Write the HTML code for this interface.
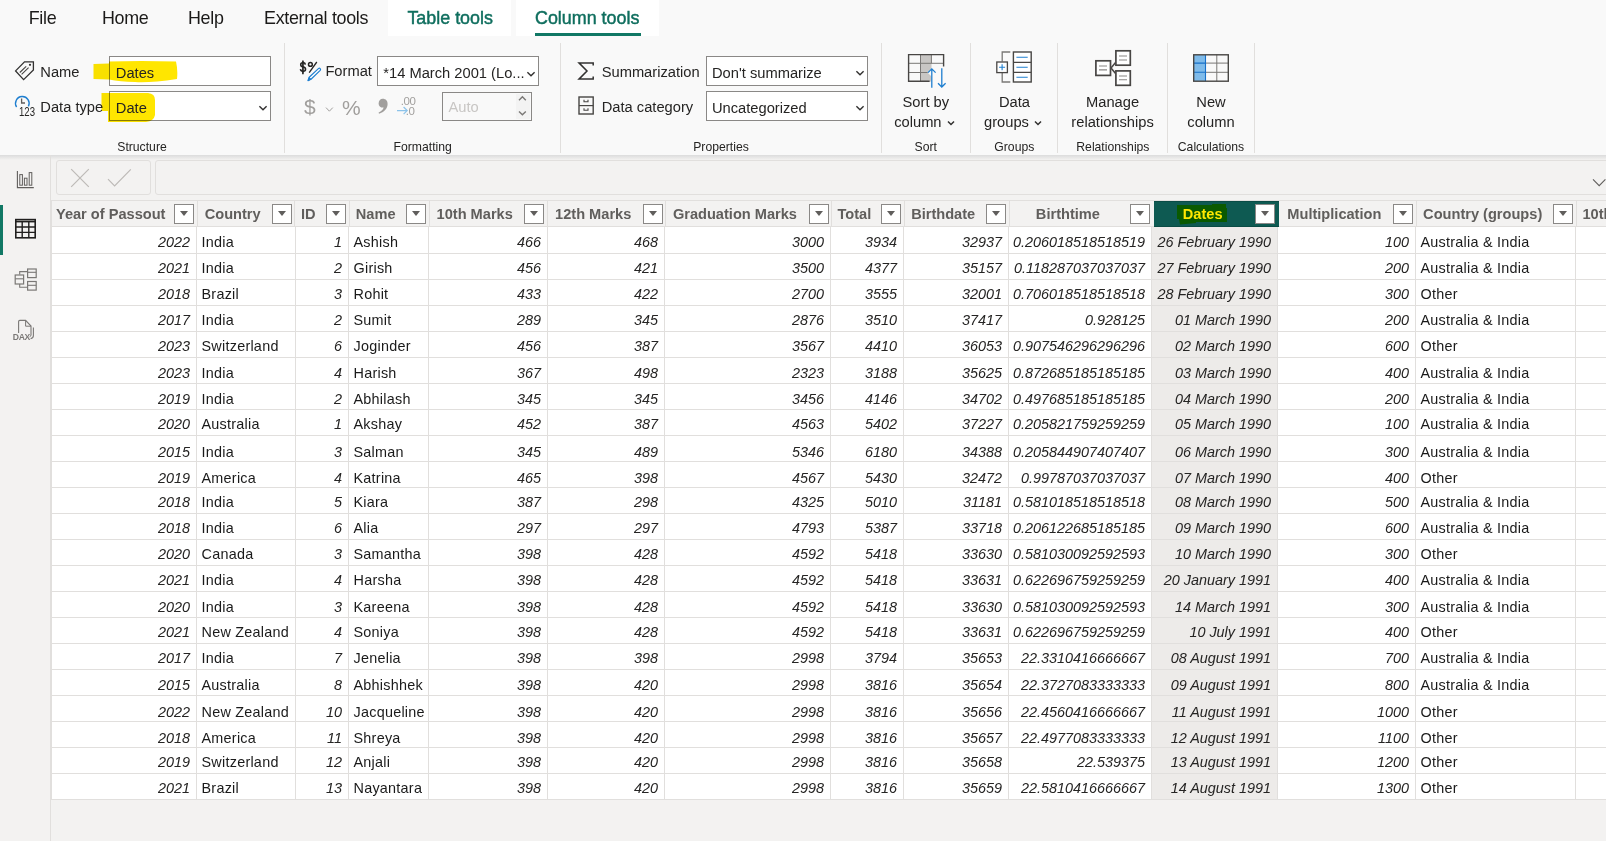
<!DOCTYPE html>
<html><head><meta charset="utf-8"><style>
html,body{margin:0;padding:0;}
body{width:1606px;height:841px;overflow:hidden;position:relative;background:#f3f2f1;font-family:"Liberation Sans", sans-serif;}
.t{position:absolute;white-space:nowrap;}
.r{position:absolute;}
</style></head><body>
<div class="r" style="left:0px;top:0px;width:1606px;height:155px;background:#f9f9f9"></div>
<div class="r" style="left:0px;top:155px;width:1606px;height:5px;background:linear-gradient(#dcdcdc,#f3f2f1)"></div>
<div class="r" style="left:388px;top:0px;width:123px;height:36px;background:#ffffff"></div>
<div class="r" style="left:516px;top:0px;width:143px;height:36px;background:#ffffff"></div>
<div class="t" style="left:28.7px;top:9.79px;font-size:17.9px;line-height:17.9px;color:#1b1a19;font-weight:normal;font-style:normal;letter-spacing:-0.3px;">File</div>
<div class="t" style="left:102px;top:9.79px;font-size:17.9px;line-height:17.9px;color:#1b1a19;font-weight:normal;font-style:normal;letter-spacing:-0.3px;">Home</div>
<div class="t" style="left:188px;top:9.79px;font-size:17.9px;line-height:17.9px;color:#1b1a19;font-weight:normal;font-style:normal;letter-spacing:-0.3px;">Help</div>
<div class="t" style="left:264px;top:9.79px;font-size:17.9px;line-height:17.9px;color:#1b1a19;font-weight:normal;font-style:normal;letter-spacing:-0.3px;">External tools</div>
<div class="t" style="left:407.4px;top:9.79px;font-size:17.9px;line-height:17.9px;color:#0f6e5e;font-weight:normal;font-style:normal;letter-spacing:0px;-webkit-text-stroke:0.45px #0f6e5e;">Table tools</div>
<div class="t" style="left:535px;top:9.79px;font-size:17.9px;line-height:17.9px;color:#0f6e5e;font-weight:normal;font-style:normal;letter-spacing:0px;-webkit-text-stroke:0.45px #0f6e5e;">Column tools</div>
<div class="r" style="left:535px;top:33px;width:106px;height:3px;background:#117865"></div>
<div class="r" style="left:284px;top:43px;width:1px;height:110px;background:#e1dfdd"></div>
<div class="r" style="left:560px;top:43px;width:1px;height:110px;background:#e1dfdd"></div>
<div class="r" style="left:881px;top:43px;width:1px;height:110px;background:#e1dfdd"></div>
<div class="r" style="left:970px;top:43px;width:1px;height:110px;background:#e1dfdd"></div>
<div class="r" style="left:1057px;top:43px;width:1px;height:110px;background:#e1dfdd"></div>
<div class="r" style="left:1167px;top:43px;width:1px;height:110px;background:#e1dfdd"></div>
<div class="r" style="left:1254px;top:43px;width:1px;height:110px;background:#e1dfdd"></div>
<div class="t" style="left:-58.0px;width:400px;text-align:center;top:141.03px;font-size:12.2px;line-height:12.2px;color:#252423;font-weight:normal;font-style:normal;">Structure</div>
<div class="t" style="left:222.7px;width:400px;text-align:center;top:141.03px;font-size:12.2px;line-height:12.2px;color:#252423;font-weight:normal;font-style:normal;">Formatting</div>
<div class="t" style="left:521.0px;width:400px;text-align:center;top:141.03px;font-size:12.2px;line-height:12.2px;color:#252423;font-weight:normal;font-style:normal;">Properties</div>
<div class="t" style="left:725.8px;width:400px;text-align:center;top:141.03px;font-size:12.2px;line-height:12.2px;color:#252423;font-weight:normal;font-style:normal;">Sort</div>
<div class="t" style="left:814.3px;width:400px;text-align:center;top:141.03px;font-size:12.2px;line-height:12.2px;color:#252423;font-weight:normal;font-style:normal;">Groups</div>
<div class="t" style="left:912.9000000000001px;width:400px;text-align:center;top:141.03px;font-size:12.2px;line-height:12.2px;color:#252423;font-weight:normal;font-style:normal;">Relationships</div>
<div class="t" style="left:1011.0px;width:400px;text-align:center;top:141.03px;font-size:12.2px;line-height:12.2px;color:#252423;font-weight:normal;font-style:normal;">Calculations</div>
<div class="t" style="left:40.3px;top:64.70px;font-size:14.7px;line-height:14.7px;color:#252423;font-weight:normal;font-style:normal;">Name</div>
<div class="t" style="left:40.3px;top:99.70px;font-size:14.7px;line-height:14.7px;color:#252423;font-weight:normal;font-style:normal;">Data type</div>
<div class="r" style="left:109px;top:56px;width:162px;height:30px;background:#fff;border:1px solid #8a8886;box-sizing:border-box"></div>
<div class="r" style="left:109px;top:91px;width:162px;height:30px;background:#fff;border:1px solid #8a8886;box-sizing:border-box"></div>
<svg class="r" style="left:0;top:0;mix-blend-mode:multiply" width="300" height="130" viewBox="0 0 300 130"><path d="M93.5 64 L109 63.5 L109 61.5 Q140 60.5 176 61.5 Q178 70 177 79 Q150 83 135 82 Q120 81.5 109 79.5 L93.5 79 Z" fill="#ffe600"/><path d="M101.5 93 L148 93 Q155 93.5 155 100 L155 115 Q154 121 146 122 L108 122 L108 111 L101.5 111 Z" fill="#ffe600"/></svg>
<div class="t" style="left:115.8px;top:66.00px;font-size:14.7px;line-height:14.7px;color:#252423;font-weight:normal;font-style:normal;">Dates</div>
<div class="t" style="left:115.8px;top:100.80px;font-size:14.7px;line-height:14.7px;color:#252423;font-weight:normal;font-style:normal;">Date</div>
<div class="t" style="left:325.4px;top:64.41px;font-size:14.7px;line-height:14.7px;color:#252423;font-weight:normal;font-style:normal;">Format</div>
<div class="r" style="left:377px;top:56px;width:162px;height:30px;background:#fff;border:1px solid #8a8886;box-sizing:border-box"></div>
<div class="t" style="left:383.3px;top:65.50px;font-size:14.7px;line-height:14.7px;color:#252423;font-weight:normal;font-style:normal;">*14 March 2001 (Lo...</div>
<div class="r" style="left:442px;top:92px;width:90px;height:29px;background:#f9f9f9;border:1px solid #8a8886;box-sizing:border-box"></div>
<div class="r" style="left:516px;top:94px;width:14px;height:25px;background:#f3f3f3"></div>
<div class="t" style="left:448.5px;top:99.91px;font-size:14.7px;line-height:14.7px;color:#c8c6c4;font-weight:normal;font-style:normal;">Auto</div>
<div class="t" style="left:601.7px;top:64.70px;font-size:14.7px;line-height:14.7px;color:#252423;font-weight:normal;font-style:normal;">Summarization</div>
<div class="t" style="left:601.7px;top:99.70px;font-size:14.7px;line-height:14.7px;color:#252423;font-weight:normal;font-style:normal;">Data category</div>
<div class="r" style="left:706px;top:56px;width:162px;height:30px;background:#fff;border:1px solid #8a8886;box-sizing:border-box"></div>
<div class="r" style="left:706px;top:91px;width:162px;height:30px;background:#fff;border:1px solid #8a8886;box-sizing:border-box"></div>
<div class="t" style="left:712px;top:65.50px;font-size:14.7px;line-height:14.7px;color:#252423;font-weight:normal;font-style:normal;">Don't summarize</div>
<div class="t" style="left:712px;top:100.50px;font-size:14.7px;line-height:14.7px;color:#252423;font-weight:normal;font-style:normal;">Uncategorized</div>
<div class="t" style="left:725.8px;width:400px;text-align:center;top:94.70px;font-size:14.7px;line-height:14.7px;color:#252423;font-weight:normal;font-style:normal;">Sort by</div>
<div class="t" style="left:814.5px;width:400px;text-align:center;top:94.70px;font-size:14.7px;line-height:14.7px;color:#252423;font-weight:normal;font-style:normal;">Data</div>
<div class="t" style="left:912.5999999999999px;width:400px;text-align:center;top:94.70px;font-size:14.7px;line-height:14.7px;color:#252423;font-weight:normal;font-style:normal;">Manage</div>
<div class="t" style="left:912.5999999999999px;width:400px;text-align:center;top:114.50px;font-size:14.7px;line-height:14.7px;color:#252423;font-weight:normal;font-style:normal;">relationships</div>
<div class="t" style="left:1011.0px;width:400px;text-align:center;top:94.70px;font-size:14.7px;line-height:14.7px;color:#252423;font-weight:normal;font-style:normal;">New</div>
<div class="t" style="left:1011.0px;width:400px;text-align:center;top:114.50px;font-size:14.7px;line-height:14.7px;color:#252423;font-weight:normal;font-style:normal;">column</div>
<div class="t" style="left:894.2px;top:114.50px;font-size:14.7px;line-height:14.7px;color:#252423;font-weight:normal;font-style:normal;">column</div>
<div class="t" style="left:984px;top:114.50px;font-size:14.7px;line-height:14.7px;color:#252423;font-weight:normal;font-style:normal;">groups</div>
<div class="r" style="left:0px;top:160px;width:50px;height:681px;background:#f3f2f1"></div>
<div class="r" style="left:50px;top:155px;width:1px;height:686px;background:#e1dfdd"></div>
<div class="r" style="left:0px;top:205px;width:3px;height:50px;background:#117865"></div>
<div class="r" style="left:56px;top:160px;width:95px;height:35px;border:1px solid #e1dfdd;border-radius:3px;box-sizing:border-box"></div>
<div class="r" style="left:155px;top:160px;width:1460px;height:35px;border:1px solid #e1dfdd;border-radius:3px;box-sizing:border-box"></div>
<svg class="r" style="left:12px;top:58px;" width="26" height="26" viewBox="12 58 26 26"><path d="M15.6 70.9 L24.5 61.8 L33.4 61.8 L33.4 70 L23.6 79.6 Z" fill="none" stroke="#323130" stroke-width="1.3" stroke-linejoin="miter"/><circle cx="30" cy="64.8" r="1.1" fill="#323130"/><path d="M19.8 72.5 L26.2 66.3 M21.6 74.4 L28.6 67.6" stroke="#484644" stroke-width="1.1"/></svg>
<svg class="r" style="left:12px;top:93px;" width="26" height="26" viewBox="12 93 26 26"><path d="M16.6 107 A6.8 6.8 0 1 1 28.4 106.4" fill="none" stroke="#1f7fd0" stroke-width="1.4"/><path d="M21.6 98.6 L21.6 103 L25 103" fill="none" stroke="#605e5c" stroke-width="1.3"/><text x="19" y="116" font-family="Liberation Sans" font-size="13.4" fill="#252423" textLength="16" lengthAdjust="spacingAndGlyphs">123</text></svg>
<svg class="r" style="left:296px;top:58px;" width="28" height="26" viewBox="296 58 28 26"><text x="299.4" y="72" font-family="Liberation Sans" font-weight="bold" font-size="14.5" fill="#252423" textLength="7" lengthAdjust="spacingAndGlyphs">$</text><path d="M302.9 60.6 L302.9 74.2" stroke="#252423" stroke-width="1.6"/><circle cx="310.4" cy="64.4" r="1.9" fill="none" stroke="#252423" stroke-width="1.5"/><path d="M316.8 62 L309.2 72.6" stroke="#252423" stroke-width="1.3"/><path d="M308 80.6 L309.2 77.2 L318.4 68.6 Q319.4 67.8 320.2 68.6 Q321 69.4 320.2 70.4 L311 79.2 Z" fill="#fff" stroke="#1f7fd0" stroke-width="1.2" stroke-linejoin="round"/><path d="M308 80.6 L309.2 77.2 L311 79.2 Z" fill="#1f7fd0" stroke="#1f7fd0" stroke-width="0.8"/></svg>
<svg class="r" style="left:300px;top:93px;" width="125" height="26" viewBox="300 93 125 26"><text x="304" y="114" font-family="Liberation Sans" font-size="21" fill="#a19f9d">$</text><path d="M326 107.6 L329.4 111.2 L332.8 107.6" fill="none" stroke="#a19f9d" stroke-width="1"/><text x="342" y="114.6" font-family="Liberation Sans" font-size="21" fill="#a19f9d">%</text><path d="M382.6 98.8 C386 98.8 387.6 101 387.6 104 C387.6 108.5 384 112.2 379 113.8 L378.6 112.6 C381.4 111.2 383.2 109.6 383.6 107.6 C380.6 107.8 378.6 106 378.6 103.4 C378.6 100.6 380.6 98.8 382.6 98.8 Z" fill="#a19f9d"/><text x="400.8" y="104.6" font-family="Liberation Sans" font-size="11.5" fill="#a19f9d" letter-spacing="-0.4">.00</text><text x="405.8" y="115.4" font-family="Liberation Sans" font-size="11.5" fill="#a19f9d" letter-spacing="-0.4">.0</text><path d="M397 110.6 L407 110.6 M403.6 107 L407.2 110.6 L403.6 114.2" fill="none" stroke="#8cc3ea" stroke-width="1.2"/></svg>
<svg class="r" style="left:514px;top:93px;" width="16" height="26" viewBox="514 93 16 26"><path d="M519 100.2 L522.4 96.8 L525.8 100.2 M519 111.4 L522.4 114.8 L525.8 111.4" fill="none" stroke="#7a7876" stroke-width="1.4"/></svg>
<svg class="r" style="left:257px;top:102.8px;" width="12" height="10" viewBox="257 102.8 12 10"><path d="M259.4 106.0 L263 109.6 L266.6 106.0" fill="none" stroke="#323130" stroke-width="1.4"/></svg>
<svg class="r" style="left:525px;top:68.6px;" width="12" height="10" viewBox="525 68.6 12 10"><path d="M527.4 71.8 L531 75.39999999999999 L534.6 71.8" fill="none" stroke="#323130" stroke-width="1.4"/></svg>
<svg class="r" style="left:854.3px;top:68.2px;" width="12" height="10" viewBox="854.3 68.2 12 10"><path d="M856.6999999999999 71.4 L860.3 75.0 L863.9 71.4" fill="none" stroke="#323130" stroke-width="1.4"/></svg>
<svg class="r" style="left:854.3px;top:103.2px;" width="12" height="10" viewBox="854.3 103.2 12 10"><path d="M856.6999999999999 106.4 L860.3 110.0 L863.9 106.4" fill="none" stroke="#323130" stroke-width="1.4"/></svg>
<svg class="r" style="left:575px;top:59px;" width="22" height="24" viewBox="575 59 22 24"><path d="M593.2 65.6 L593.2 62.9 L579 62.9 L587 71 L579 79.1 L593.2 79.1 L593.2 76.4" fill="none" stroke="#323130" stroke-width="1.5" stroke-linejoin="miter"/></svg>
<svg class="r" style="left:575px;top:93px;" width="22" height="24" viewBox="575 93 22 24"><rect x="579" y="97" width="14.2" height="17" fill="none" stroke="#484644" stroke-width="1.4"/><path d="M579 105.6 L593.2 105.6" stroke="#484644" stroke-width="1.2"/><path d="M584 99.8 L584 101.8 L588 101.8 L588 99.8 M584 108.2 L584 110.2 L588 110.2 L588 108.2" fill="none" stroke="#484644" stroke-width="1.1"/></svg>
<svg class="r" style="left:904px;top:50px;" width="46" height="42" viewBox="904 50 46 42"><rect x="920.5" y="54.2" width="11" height="27.4" fill="#c8c6c4"/><path d="M908.8 63.3 L943 63.3 M908.8 72.5 L930 72.5 M920.5 54.2 L920.5 81.6 M931.4 54.2 L931.4 63.3" stroke="#7a7876" stroke-width="1"/><path d="M943.6 66.4 L943.6 54.6 L908.6 54.6 L908.6 81.2 L929.6 81.2" fill="none" stroke="#484644" stroke-width="1.4"/><path d="M927.5 72.5 L931.8 68.2 L936 72.5 L931.8 76.8 Z" fill="#f9f9f9"/><path d="M931.8 87.7 L931.8 69 M928 72.6 L931.8 68.8 L935.6 72.6" fill="none" stroke="#1f7fd0" stroke-width="1.3"/><path d="M941.8 68.2 L941.8 87 M938 83.2 L941.8 87 L945.6 83.2" fill="none" stroke="#1f7fd0" stroke-width="1.3"/></svg>
<svg class="r" style="left:993px;top:48px;" width="42" height="38" viewBox="993 48 42 38"><path d="M1010.3 52 L1002.2 52 L1002.2 61.6 M1002.2 72.9 L1002.2 82 L1010.3 82" fill="none" stroke="#7a7876" stroke-width="1.3"/><rect x="996.8" y="62" width="10.6" height="10.6" fill="#fff" stroke="#484644" stroke-width="1.3"/><path d="M1002.1 64.3 L1002.1 70.3 M999.1 67.3 L1005.1 67.3" stroke="#1f7fd0" stroke-width="1.1"/><rect x="1013.4" y="52" width="17.8" height="30" fill="#fff" stroke="#484644" stroke-width="1.4"/><path d="M1013.4 62.4 L1031.2 62.4 M1013.4 72.4 L1031.2 72.4" stroke="#484644" stroke-width="1.2"/><path d="M1016.4 57.2 L1027.7 57.2 M1016.4 67.2 L1027.7 67.2 M1016.4 77.3 L1027.7 77.3" stroke="#1f7fd0" stroke-width="1.1"/></svg>
<svg class="r" style="left:1090px;top:46px;" width="46" height="44" viewBox="1090 46 46 44"><path d="M1111 68 L1115.6 62.6 M1111 68 L1115.6 73.6" stroke="#484644" stroke-width="1.6"/><rect x="1095.9" y="60.8" width="14.6" height="14.6" fill="#fff" stroke="#484644" stroke-width="1.7"/><rect x="1115.9" y="50.8" width="14.4" height="14.4" fill="#fff" stroke="#484644" stroke-width="1.7"/><rect x="1115.9" y="70.9" width="14.4" height="14.4" fill="#fff" stroke="#484644" stroke-width="1.7"/><path d="M1099 66 L1107 66 M1099 69.9 L1107 69.9 M1119 56 L1127 56 M1119 60 L1127 60 M1119 76 L1127 76 M1119 79.8 L1127 79.8" stroke="#8a8886" stroke-width="1.1"/></svg>
<svg class="r" style="left:1190px;top:50px;" width="42" height="36" viewBox="1190 50 42 36"><rect x="1193.6" y="54.7" width="12" height="26.5" fill="#7fbbea"/><path d="M1205.5 63.1 L1228 63.1 M1205.5 72.3 L1228 72.3 M1216.8 54.7 L1216.8 81.2" stroke="#7a7876" stroke-width="1"/><path d="M1194 63.1 L1205.5 63.1 M1194 72.3 L1205.5 72.3 M1205.5 54.7 L1205.5 81.2" stroke="#1770c8" stroke-width="1.1"/><rect x="1193.7" y="54.8" width="34.6" height="26.4" fill="none" stroke="#484644" stroke-width="1.4"/></svg>
<svg class="r" style="left:945.5px;top:119px;" width="10" height="8" viewBox="945.5 119 10 8"><path d="M947.5 121.5 L950.5 124.5 L953.5 121.5" fill="none" stroke="#323130" stroke-width="1.5"/></svg>
<svg class="r" style="left:1032.7px;top:119px;" width="10" height="8" viewBox="1032.7 119 10 8"><path d="M1034.7 121.5 L1037.7 124.5 L1040.7 121.5" fill="none" stroke="#323130" stroke-width="1.5"/></svg>
<svg class="r" style="left:66px;top:165px;" width="70" height="26" viewBox="66 165 70 26"><path d="M71.2 169.2 L88.8 186.8 M88.8 169.2 L71.2 186.8" stroke="#bdbab7" stroke-width="1.2"/><path d="M108 179.2 L114.6 185.8 L130.8 169.4" fill="none" stroke="#bdbab7" stroke-width="1.2"/></svg>
<svg class="r" style="left:1588px;top:174px;" width="18" height="16" viewBox="1588 174 18 16"><path d="M1593 179.4 L1599.2 185.6 L1605.4 179.4" fill="none" stroke="#605e5c" stroke-width="1.1"/></svg>
<svg class="r" style="left:12px;top:166px;" width="28" height="28" viewBox="12 166 28 28"><path d="M17.4 171 L17.4 187.6 L33.8 187.6" fill="none" stroke="#605e5c" stroke-width="1.1"/><rect x="19.8" y="174.6" width="2.6" height="10.6" fill="none" stroke="#605e5c" stroke-width="1"/><rect x="24.4" y="178.2" width="2.6" height="7" fill="none" stroke="#605e5c" stroke-width="1"/><rect x="29.2" y="172.6" width="2.6" height="12.6" fill="none" stroke="#605e5c" stroke-width="1"/></svg>
<svg class="r" style="left:12px;top:214px;" width="28" height="28" viewBox="12 214 28 28"><rect x="15.8" y="219.6" width="19.4" height="18.2" fill="none" stroke="#201f1e" stroke-width="1.6"/><path d="M15.8 221.6 L35.2 221.6" stroke="#201f1e" stroke-width="1.6"/><path d="M15.8 227 L35.2 227 M15.8 232.4 L35.2 232.4 M22.2 221.6 L22.2 237.8 M28.8 221.6 L28.8 237.8" stroke="#201f1e" stroke-width="1.4"/></svg>
<svg class="r" style="left:10px;top:264px;" width="32" height="32" viewBox="10 264 32 32"><path d="M19.7 274.6 L19.7 271.6 L27.4 271.6 M19.7 284 L19.7 287.3 L27.4 287.3" fill="none" stroke="#7a7876" stroke-width="1.1"/><rect x="15.2" y="275" width="8.4" height="9" fill="#f3f2f1" stroke="#7a7876" stroke-width="1.2"/><path d="M15.2 278.8 L23.6 278.8" stroke="#7a7876" stroke-width="1.1"/><rect x="27.6" y="269" width="8.6" height="8.6" fill="#f3f2f1" stroke="#7a7876" stroke-width="1.2"/><path d="M27.6 272.3 L36.2 272.3" stroke="#7a7876" stroke-width="1.1"/><rect x="27.6" y="281.5" width="8.6" height="8.6" fill="#f3f2f1" stroke="#7a7876" stroke-width="1.2"/><path d="M27.6 285.3 L36.2 285.3" stroke="#7a7876" stroke-width="1.1"/></svg>
<svg class="r" style="left:10px;top:315px;" width="30" height="28" viewBox="10 315 30 28"><path d="M18.6 333 L18.6 321.6 Q18.6 320.4 19.8 320.4 L25.6 320.4 L31 326 L31 335" fill="none" stroke="#7a7876" stroke-width="1.1"/><path d="M25.6 320.6 L25.6 326.2 L31 326.2" fill="none" stroke="#7a7876" stroke-width="1"/><path d="M33.4 327.4 L33.4 335.6 Q33.4 338.2 30.6 338.6" fill="none" stroke="#7a7876" stroke-width="1.1"/><path d="M31 335 Q31 336.4 29.6 336.8" fill="none" stroke="#7a7876" stroke-width="1"/><text x="12.8" y="339.5" font-family="Liberation Sans" font-weight="bold" font-size="8.6" fill="#7a7876" letter-spacing="-0.3">DAX</text></svg>
<div class="r" style="left:51px;top:227px;width:1555px;height:572px;background:#ffffff"></div>
<div class="r" style="left:1151px;top:227px;width:126px;height:572px;background:#edebe9"></div>
<div class="r" style="left:51px;top:200px;width:1555px;height:27px;background:#f3f2f1"></div>
<div class="r" style="left:51px;top:200px;width:1555px;height:1px;background:#e1dfdd"></div>
<div class="r" style="left:51px;top:226px;width:1555px;height:1px;background:#e1dfdd"></div>
<div class="r" style="left:1154px;top:201px;width:125px;height:26px;background:#0e5a52;border-top:1px solid #0a4c45;border-bottom:1px solid #0a4c45;box-sizing:border-box"></div>
<div class="r" style="left:51px;top:201px;width:1px;height:25px;background:#e1dfdd"></div>
<div class="r" style="left:197px;top:201px;width:1px;height:25px;background:#e1dfdd"></div>
<div class="r" style="left:294px;top:201px;width:1px;height:25px;background:#e1dfdd"></div>
<div class="r" style="left:349px;top:201px;width:1px;height:25px;background:#e1dfdd"></div>
<div class="r" style="left:429px;top:201px;width:1px;height:25px;background:#e1dfdd"></div>
<div class="r" style="left:547px;top:201px;width:1px;height:25px;background:#e1dfdd"></div>
<div class="r" style="left:665px;top:201px;width:1px;height:25px;background:#e1dfdd"></div>
<div class="r" style="left:831px;top:201px;width:1px;height:25px;background:#e1dfdd"></div>
<div class="r" style="left:904px;top:201px;width:1px;height:25px;background:#e1dfdd"></div>
<div class="r" style="left:1009px;top:201px;width:1px;height:25px;background:#e1dfdd"></div>
<div class="r" style="left:1416px;top:201px;width:1px;height:25px;background:#e1dfdd"></div>
<div class="r" style="left:1576px;top:201px;width:1px;height:25px;background:#e1dfdd"></div>
<div class="r" style="left:51px;top:253px;width:1555px;height:1px;background:#e1dfdd"></div>
<div class="r" style="left:51px;top:279px;width:1555px;height:1px;background:#e1dfdd"></div>
<div class="r" style="left:51px;top:305px;width:1555px;height:1px;background:#e1dfdd"></div>
<div class="r" style="left:51px;top:331px;width:1555px;height:1px;background:#e1dfdd"></div>
<div class="r" style="left:51px;top:357px;width:1555px;height:1px;background:#e1dfdd"></div>
<div class="r" style="left:51px;top:383px;width:1555px;height:1px;background:#e1dfdd"></div>
<div class="r" style="left:51px;top:409px;width:1555px;height:1px;background:#e1dfdd"></div>
<div class="r" style="left:51px;top:435px;width:1555px;height:1px;background:#e1dfdd"></div>
<div class="r" style="left:51px;top:461px;width:1555px;height:1px;background:#e1dfdd"></div>
<div class="r" style="left:51px;top:487px;width:1555px;height:1px;background:#e1dfdd"></div>
<div class="r" style="left:51px;top:513px;width:1555px;height:1px;background:#e1dfdd"></div>
<div class="r" style="left:51px;top:539px;width:1555px;height:1px;background:#e1dfdd"></div>
<div class="r" style="left:51px;top:565px;width:1555px;height:1px;background:#e1dfdd"></div>
<div class="r" style="left:51px;top:591px;width:1555px;height:1px;background:#e1dfdd"></div>
<div class="r" style="left:51px;top:617px;width:1555px;height:1px;background:#e1dfdd"></div>
<div class="r" style="left:51px;top:643px;width:1555px;height:1px;background:#e1dfdd"></div>
<div class="r" style="left:51px;top:669px;width:1555px;height:1px;background:#e1dfdd"></div>
<div class="r" style="left:51px;top:695px;width:1555px;height:1px;background:#e1dfdd"></div>
<div class="r" style="left:51px;top:721px;width:1555px;height:1px;background:#e1dfdd"></div>
<div class="r" style="left:51px;top:747px;width:1555px;height:1px;background:#e1dfdd"></div>
<div class="r" style="left:51px;top:773px;width:1555px;height:1px;background:#e1dfdd"></div>
<div class="r" style="left:51px;top:799px;width:1555px;height:1px;background:#e1dfdd"></div>
<div class="r" style="left:51px;top:227px;width:1px;height:572px;background:#e1dfdd"></div>
<div class="r" style="left:196px;top:227px;width:1px;height:572px;background:#e1dfdd"></div>
<div class="r" style="left:295px;top:227px;width:1px;height:572px;background:#e1dfdd"></div>
<div class="r" style="left:348px;top:227px;width:1px;height:572px;background:#e1dfdd"></div>
<div class="r" style="left:428px;top:227px;width:1px;height:572px;background:#e1dfdd"></div>
<div class="r" style="left:547px;top:227px;width:1px;height:572px;background:#e1dfdd"></div>
<div class="r" style="left:664px;top:227px;width:1px;height:572px;background:#e1dfdd"></div>
<div class="r" style="left:830px;top:227px;width:1px;height:572px;background:#e1dfdd"></div>
<div class="r" style="left:903px;top:227px;width:1px;height:572px;background:#e1dfdd"></div>
<div class="r" style="left:1008px;top:227px;width:1px;height:572px;background:#e1dfdd"></div>
<div class="r" style="left:1151px;top:227px;width:1px;height:572px;background:#e1dfdd"></div>
<div class="r" style="left:1277px;top:227px;width:1px;height:572px;background:#e1dfdd"></div>
<div class="r" style="left:1415px;top:227px;width:1px;height:572px;background:#e1dfdd"></div>
<div class="r" style="left:1575px;top:227px;width:1px;height:572px;background:#e1dfdd"></div>
<svg class="r" style="left:1170px;top:200px" width="70" height="30" viewBox="0 0 70 30"><path d="M7 5 L42 5 L42 4 L56 4 L56 8 L57 8 L57 22 L26 22 L26 23 L10 24.6 L9 19 L7 19 Z" fill="#0a5a00"/></svg>
<div class="t" style="left:-89.3px;width:400px;text-align:center;top:207.19px;font-size:14.6px;line-height:14.6px;color:#605e5c;font-weight:bold;font-style:normal;">Year of Passout</div>
<div class="r" style="left:174px;top:204px;width:20px;height:20px;background:#fff;border:1px solid #8a8886;box-sizing:border-box"></div>
<svg class="r" style="left:180px;top:211px" width="8" height="5" viewBox="0 0 8 5"><path d="M0 0 L8 0 L4 5 Z" fill="#605e5c"/></svg>
<div class="t" style="left:32.69999999999999px;width:400px;text-align:center;top:207.19px;font-size:14.6px;line-height:14.6px;color:#605e5c;font-weight:bold;font-style:normal;">Country</div>
<div class="r" style="left:272px;top:204px;width:20px;height:20px;background:#fff;border:1px solid #8a8886;box-sizing:border-box"></div>
<svg class="r" style="left:278px;top:211px" width="8" height="5" viewBox="0 0 8 5"><path d="M0 0 L8 0 L4 5 Z" fill="#605e5c"/></svg>
<div class="t" style="left:108.19999999999999px;width:400px;text-align:center;top:207.19px;font-size:14.6px;line-height:14.6px;color:#605e5c;font-weight:bold;font-style:normal;">ID</div>
<div class="r" style="left:326px;top:204px;width:20px;height:20px;background:#fff;border:1px solid #8a8886;box-sizing:border-box"></div>
<svg class="r" style="left:332px;top:211px" width="8" height="5" viewBox="0 0 8 5"><path d="M0 0 L8 0 L4 5 Z" fill="#605e5c"/></svg>
<div class="t" style="left:175.7px;width:400px;text-align:center;top:207.19px;font-size:14.6px;line-height:14.6px;color:#605e5c;font-weight:bold;font-style:normal;">Name</div>
<div class="r" style="left:406px;top:204px;width:20px;height:20px;background:#fff;border:1px solid #8a8886;box-sizing:border-box"></div>
<svg class="r" style="left:412px;top:211px" width="8" height="5" viewBox="0 0 8 5"><path d="M0 0 L8 0 L4 5 Z" fill="#605e5c"/></svg>
<div class="t" style="left:274.7px;width:400px;text-align:center;top:207.19px;font-size:14.6px;line-height:14.6px;color:#605e5c;font-weight:bold;font-style:normal;">10th Marks</div>
<div class="r" style="left:524px;top:204px;width:20px;height:20px;background:#fff;border:1px solid #8a8886;box-sizing:border-box"></div>
<svg class="r" style="left:530px;top:211px" width="8" height="5" viewBox="0 0 8 5"><path d="M0 0 L8 0 L4 5 Z" fill="#605e5c"/></svg>
<div class="t" style="left:393.20000000000005px;width:400px;text-align:center;top:207.19px;font-size:14.6px;line-height:14.6px;color:#605e5c;font-weight:bold;font-style:normal;">12th Marks</div>
<div class="r" style="left:643px;top:204px;width:20px;height:20px;background:#fff;border:1px solid #8a8886;box-sizing:border-box"></div>
<svg class="r" style="left:649px;top:211px" width="8" height="5" viewBox="0 0 8 5"><path d="M0 0 L8 0 L4 5 Z" fill="#605e5c"/></svg>
<div class="t" style="left:534.95px;width:400px;text-align:center;top:207.19px;font-size:14.6px;line-height:14.6px;color:#605e5c;font-weight:bold;font-style:normal;">Graduation Marks</div>
<div class="r" style="left:808.5px;top:204px;width:20px;height:20px;background:#fff;border:1px solid #8a8886;box-sizing:border-box"></div>
<svg class="r" style="left:814.5px;top:211px" width="8" height="5" viewBox="0 0 8 5"><path d="M0 0 L8 0 L4 5 Z" fill="#605e5c"/></svg>
<div class="t" style="left:654.4000000000001px;width:400px;text-align:center;top:207.19px;font-size:14.6px;line-height:14.6px;color:#605e5c;font-weight:bold;font-style:normal;">Total</div>
<div class="r" style="left:881.4px;top:204px;width:20px;height:20px;background:#fff;border:1px solid #8a8886;box-sizing:border-box"></div>
<svg class="r" style="left:887.4px;top:211px" width="8" height="5" viewBox="0 0 8 5"><path d="M0 0 L8 0 L4 5 Z" fill="#605e5c"/></svg>
<div class="t" style="left:743.2px;width:400px;text-align:center;top:207.19px;font-size:14.6px;line-height:14.6px;color:#605e5c;font-weight:bold;font-style:normal;">Birthdate</div>
<div class="r" style="left:986px;top:204px;width:20px;height:20px;background:#fff;border:1px solid #8a8886;box-sizing:border-box"></div>
<svg class="r" style="left:992px;top:211px" width="8" height="5" viewBox="0 0 8 5"><path d="M0 0 L8 0 L4 5 Z" fill="#605e5c"/></svg>
<div class="t" style="left:867.9000000000001px;width:400px;text-align:center;top:207.19px;font-size:14.6px;line-height:14.6px;color:#605e5c;font-weight:bold;font-style:normal;">Birthtime</div>
<div class="r" style="left:1130.4px;top:204px;width:20px;height:20px;background:#fff;border:1px solid #8a8886;box-sizing:border-box"></div>
<svg class="r" style="left:1136.4px;top:211px" width="8" height="5" viewBox="0 0 8 5"><path d="M0 0 L8 0 L4 5 Z" fill="#605e5c"/></svg>
<div class="t" style="left:1002.7px;width:400px;text-align:center;top:207.19px;font-size:14.6px;line-height:14.6px;color:#ffe800;font-weight:bold;font-style:normal;">Dates</div>
<div class="r" style="left:1255px;top:204px;width:20px;height:20px;background:#fff;border:1px solid #8a8886;box-sizing:border-box"></div>
<svg class="r" style="left:1261px;top:211px" width="8" height="5" viewBox="0 0 8 5"><path d="M0 0 L8 0 L4 5 Z" fill="#605e5c"/></svg>
<div class="t" style="left:1134.3500000000001px;width:400px;text-align:center;top:207.19px;font-size:14.6px;line-height:14.6px;color:#605e5c;font-weight:bold;font-style:normal;">Multiplication</div>
<div class="r" style="left:1393.3px;top:204px;width:20px;height:20px;background:#fff;border:1px solid #8a8886;box-sizing:border-box"></div>
<svg class="r" style="left:1399.3px;top:211px" width="8" height="5" viewBox="0 0 8 5"><path d="M0 0 L8 0 L4 5 Z" fill="#605e5c"/></svg>
<div class="t" style="left:1282.7px;width:400px;text-align:center;top:207.19px;font-size:14.6px;line-height:14.6px;color:#605e5c;font-weight:bold;font-style:normal;">Country (groups)</div>
<div class="r" style="left:1553px;top:204px;width:20px;height:20px;background:#fff;border:1px solid #8a8886;box-sizing:border-box"></div>
<svg class="r" style="left:1559px;top:211px" width="8" height="5" viewBox="0 0 8 5"><path d="M0 0 L8 0 L4 5 Z" fill="#605e5c"/></svg>
<div class="t" style="left:1582.5px;top:207.19px;font-size:14.6px;line-height:14.6px;color:#605e5c;font-weight:bold;font-style:normal;">10th Marks</div>
<div class="t" style="right:1416px;top:234.96px;font-size:14.4px;line-height:14.4px;color:#252423;font-weight:normal;font-style:italic;">2022</div>
<div class="t" style="left:201.5px;top:234.96px;font-size:14.4px;line-height:14.4px;color:#1a1a1a;font-weight:normal;font-style:normal;letter-spacing:0.25px">India</div>
<div class="t" style="right:1264px;top:234.96px;font-size:14.4px;line-height:14.4px;color:#252423;font-weight:normal;font-style:italic;">1</div>
<div class="t" style="left:353.5px;top:234.96px;font-size:14.4px;line-height:14.4px;color:#1a1a1a;font-weight:normal;font-style:normal;letter-spacing:0.25px">Ashish</div>
<div class="t" style="right:1065px;top:234.96px;font-size:14.4px;line-height:14.4px;color:#252423;font-weight:normal;font-style:italic;">466</div>
<div class="t" style="right:948px;top:234.96px;font-size:14.4px;line-height:14.4px;color:#252423;font-weight:normal;font-style:italic;">468</div>
<div class="t" style="right:782px;top:234.96px;font-size:14.4px;line-height:14.4px;color:#252423;font-weight:normal;font-style:italic;">3000</div>
<div class="t" style="right:709px;top:234.96px;font-size:14.4px;line-height:14.4px;color:#252423;font-weight:normal;font-style:italic;">3934</div>
<div class="t" style="right:604px;top:234.96px;font-size:14.4px;line-height:14.4px;color:#252423;font-weight:normal;font-style:italic;">32937</div>
<div class="t" style="right:461px;top:234.96px;font-size:14.4px;line-height:14.4px;color:#252423;font-weight:normal;font-style:italic;">0.206018518518519</div>
<div class="t" style="right:335px;top:234.96px;font-size:14.4px;line-height:14.4px;color:#252423;font-weight:normal;font-style:italic;">26 February 1990</div>
<div class="t" style="right:197px;top:234.96px;font-size:14.4px;line-height:14.4px;color:#252423;font-weight:normal;font-style:italic;">100</div>
<div class="t" style="left:1420.5px;top:234.96px;font-size:14.4px;line-height:14.4px;color:#1a1a1a;font-weight:normal;font-style:normal;letter-spacing:0.25px">Australia &amp; India</div>
<div class="t" style="right:1416px;top:260.76px;font-size:14.4px;line-height:14.4px;color:#252423;font-weight:normal;font-style:italic;">2021</div>
<div class="t" style="left:201.5px;top:260.76px;font-size:14.4px;line-height:14.4px;color:#1a1a1a;font-weight:normal;font-style:normal;letter-spacing:0.25px">India</div>
<div class="t" style="right:1264px;top:260.76px;font-size:14.4px;line-height:14.4px;color:#252423;font-weight:normal;font-style:italic;">2</div>
<div class="t" style="left:353.5px;top:260.76px;font-size:14.4px;line-height:14.4px;color:#1a1a1a;font-weight:normal;font-style:normal;letter-spacing:0.25px">Girish</div>
<div class="t" style="right:1065px;top:260.76px;font-size:14.4px;line-height:14.4px;color:#252423;font-weight:normal;font-style:italic;">456</div>
<div class="t" style="right:948px;top:260.76px;font-size:14.4px;line-height:14.4px;color:#252423;font-weight:normal;font-style:italic;">421</div>
<div class="t" style="right:782px;top:260.76px;font-size:14.4px;line-height:14.4px;color:#252423;font-weight:normal;font-style:italic;">3500</div>
<div class="t" style="right:709px;top:260.76px;font-size:14.4px;line-height:14.4px;color:#252423;font-weight:normal;font-style:italic;">4377</div>
<div class="t" style="right:604px;top:260.76px;font-size:14.4px;line-height:14.4px;color:#252423;font-weight:normal;font-style:italic;">35157</div>
<div class="t" style="right:461px;top:260.76px;font-size:14.4px;line-height:14.4px;color:#252423;font-weight:normal;font-style:italic;">0.118287037037037</div>
<div class="t" style="right:335px;top:260.76px;font-size:14.4px;line-height:14.4px;color:#252423;font-weight:normal;font-style:italic;">27 February 1990</div>
<div class="t" style="right:197px;top:260.76px;font-size:14.4px;line-height:14.4px;color:#252423;font-weight:normal;font-style:italic;">200</div>
<div class="t" style="left:1420.5px;top:260.76px;font-size:14.4px;line-height:14.4px;color:#1a1a1a;font-weight:normal;font-style:normal;letter-spacing:0.25px">Australia &amp; India</div>
<div class="t" style="right:1416px;top:286.86px;font-size:14.4px;line-height:14.4px;color:#252423;font-weight:normal;font-style:italic;">2018</div>
<div class="t" style="left:201.5px;top:286.86px;font-size:14.4px;line-height:14.4px;color:#1a1a1a;font-weight:normal;font-style:normal;letter-spacing:0.25px">Brazil</div>
<div class="t" style="right:1264px;top:286.86px;font-size:14.4px;line-height:14.4px;color:#252423;font-weight:normal;font-style:italic;">3</div>
<div class="t" style="left:353.5px;top:286.86px;font-size:14.4px;line-height:14.4px;color:#1a1a1a;font-weight:normal;font-style:normal;letter-spacing:0.25px">Rohit</div>
<div class="t" style="right:1065px;top:286.86px;font-size:14.4px;line-height:14.4px;color:#252423;font-weight:normal;font-style:italic;">433</div>
<div class="t" style="right:948px;top:286.86px;font-size:14.4px;line-height:14.4px;color:#252423;font-weight:normal;font-style:italic;">422</div>
<div class="t" style="right:782px;top:286.86px;font-size:14.4px;line-height:14.4px;color:#252423;font-weight:normal;font-style:italic;">2700</div>
<div class="t" style="right:709px;top:286.86px;font-size:14.4px;line-height:14.4px;color:#252423;font-weight:normal;font-style:italic;">3555</div>
<div class="t" style="right:604px;top:286.86px;font-size:14.4px;line-height:14.4px;color:#252423;font-weight:normal;font-style:italic;">32001</div>
<div class="t" style="right:461px;top:286.86px;font-size:14.4px;line-height:14.4px;color:#252423;font-weight:normal;font-style:italic;">0.706018518518518</div>
<div class="t" style="right:335px;top:286.86px;font-size:14.4px;line-height:14.4px;color:#252423;font-weight:normal;font-style:italic;">28 February 1990</div>
<div class="t" style="right:197px;top:286.86px;font-size:14.4px;line-height:14.4px;color:#252423;font-weight:normal;font-style:italic;">300</div>
<div class="t" style="left:1420.5px;top:286.86px;font-size:14.4px;line-height:14.4px;color:#1a1a1a;font-weight:normal;font-style:normal;letter-spacing:0.25px">Other</div>
<div class="t" style="right:1416px;top:312.86px;font-size:14.4px;line-height:14.4px;color:#252423;font-weight:normal;font-style:italic;">2017</div>
<div class="t" style="left:201.5px;top:312.86px;font-size:14.4px;line-height:14.4px;color:#1a1a1a;font-weight:normal;font-style:normal;letter-spacing:0.25px">India</div>
<div class="t" style="right:1264px;top:312.86px;font-size:14.4px;line-height:14.4px;color:#252423;font-weight:normal;font-style:italic;">2</div>
<div class="t" style="left:353.5px;top:312.86px;font-size:14.4px;line-height:14.4px;color:#1a1a1a;font-weight:normal;font-style:normal;letter-spacing:0.25px">Sumit</div>
<div class="t" style="right:1065px;top:312.86px;font-size:14.4px;line-height:14.4px;color:#252423;font-weight:normal;font-style:italic;">289</div>
<div class="t" style="right:948px;top:312.86px;font-size:14.4px;line-height:14.4px;color:#252423;font-weight:normal;font-style:italic;">345</div>
<div class="t" style="right:782px;top:312.86px;font-size:14.4px;line-height:14.4px;color:#252423;font-weight:normal;font-style:italic;">2876</div>
<div class="t" style="right:709px;top:312.86px;font-size:14.4px;line-height:14.4px;color:#252423;font-weight:normal;font-style:italic;">3510</div>
<div class="t" style="right:604px;top:312.86px;font-size:14.4px;line-height:14.4px;color:#252423;font-weight:normal;font-style:italic;">37417</div>
<div class="t" style="right:461px;top:312.86px;font-size:14.4px;line-height:14.4px;color:#252423;font-weight:normal;font-style:italic;">0.928125</div>
<div class="t" style="right:335px;top:312.86px;font-size:14.4px;line-height:14.4px;color:#252423;font-weight:normal;font-style:italic;">01 March 1990</div>
<div class="t" style="right:197px;top:312.86px;font-size:14.4px;line-height:14.4px;color:#252423;font-weight:normal;font-style:italic;">200</div>
<div class="t" style="left:1420.5px;top:312.86px;font-size:14.4px;line-height:14.4px;color:#1a1a1a;font-weight:normal;font-style:normal;letter-spacing:0.25px">Australia &amp; India</div>
<div class="t" style="right:1416px;top:339.46px;font-size:14.4px;line-height:14.4px;color:#252423;font-weight:normal;font-style:italic;">2023</div>
<div class="t" style="left:201.5px;top:339.46px;font-size:14.4px;line-height:14.4px;color:#1a1a1a;font-weight:normal;font-style:normal;letter-spacing:0.25px">Switzerland</div>
<div class="t" style="right:1264px;top:339.46px;font-size:14.4px;line-height:14.4px;color:#252423;font-weight:normal;font-style:italic;">6</div>
<div class="t" style="left:353.5px;top:339.46px;font-size:14.4px;line-height:14.4px;color:#1a1a1a;font-weight:normal;font-style:normal;letter-spacing:0.25px">Joginder</div>
<div class="t" style="right:1065px;top:339.46px;font-size:14.4px;line-height:14.4px;color:#252423;font-weight:normal;font-style:italic;">456</div>
<div class="t" style="right:948px;top:339.46px;font-size:14.4px;line-height:14.4px;color:#252423;font-weight:normal;font-style:italic;">387</div>
<div class="t" style="right:782px;top:339.46px;font-size:14.4px;line-height:14.4px;color:#252423;font-weight:normal;font-style:italic;">3567</div>
<div class="t" style="right:709px;top:339.46px;font-size:14.4px;line-height:14.4px;color:#252423;font-weight:normal;font-style:italic;">4410</div>
<div class="t" style="right:604px;top:339.46px;font-size:14.4px;line-height:14.4px;color:#252423;font-weight:normal;font-style:italic;">36053</div>
<div class="t" style="right:461px;top:339.46px;font-size:14.4px;line-height:14.4px;color:#252423;font-weight:normal;font-style:italic;">0.907546296296296</div>
<div class="t" style="right:335px;top:339.46px;font-size:14.4px;line-height:14.4px;color:#252423;font-weight:normal;font-style:italic;">02 March 1990</div>
<div class="t" style="right:197px;top:339.46px;font-size:14.4px;line-height:14.4px;color:#252423;font-weight:normal;font-style:italic;">600</div>
<div class="t" style="left:1420.5px;top:339.46px;font-size:14.4px;line-height:14.4px;color:#1a1a1a;font-weight:normal;font-style:normal;letter-spacing:0.25px">Other</div>
<div class="t" style="right:1416px;top:365.66px;font-size:14.4px;line-height:14.4px;color:#252423;font-weight:normal;font-style:italic;">2023</div>
<div class="t" style="left:201.5px;top:365.66px;font-size:14.4px;line-height:14.4px;color:#1a1a1a;font-weight:normal;font-style:normal;letter-spacing:0.25px">India</div>
<div class="t" style="right:1264px;top:365.66px;font-size:14.4px;line-height:14.4px;color:#252423;font-weight:normal;font-style:italic;">4</div>
<div class="t" style="left:353.5px;top:365.66px;font-size:14.4px;line-height:14.4px;color:#1a1a1a;font-weight:normal;font-style:normal;letter-spacing:0.25px">Harish</div>
<div class="t" style="right:1065px;top:365.66px;font-size:14.4px;line-height:14.4px;color:#252423;font-weight:normal;font-style:italic;">367</div>
<div class="t" style="right:948px;top:365.66px;font-size:14.4px;line-height:14.4px;color:#252423;font-weight:normal;font-style:italic;">498</div>
<div class="t" style="right:782px;top:365.66px;font-size:14.4px;line-height:14.4px;color:#252423;font-weight:normal;font-style:italic;">2323</div>
<div class="t" style="right:709px;top:365.66px;font-size:14.4px;line-height:14.4px;color:#252423;font-weight:normal;font-style:italic;">3188</div>
<div class="t" style="right:604px;top:365.66px;font-size:14.4px;line-height:14.4px;color:#252423;font-weight:normal;font-style:italic;">35625</div>
<div class="t" style="right:461px;top:365.66px;font-size:14.4px;line-height:14.4px;color:#252423;font-weight:normal;font-style:italic;">0.872685185185185</div>
<div class="t" style="right:335px;top:365.66px;font-size:14.4px;line-height:14.4px;color:#252423;font-weight:normal;font-style:italic;">03 March 1990</div>
<div class="t" style="right:197px;top:365.66px;font-size:14.4px;line-height:14.4px;color:#252423;font-weight:normal;font-style:italic;">400</div>
<div class="t" style="left:1420.5px;top:365.66px;font-size:14.4px;line-height:14.4px;color:#1a1a1a;font-weight:normal;font-style:normal;letter-spacing:0.25px">Australia &amp; India</div>
<div class="t" style="right:1416px;top:391.86px;font-size:14.4px;line-height:14.4px;color:#252423;font-weight:normal;font-style:italic;">2019</div>
<div class="t" style="left:201.5px;top:391.86px;font-size:14.4px;line-height:14.4px;color:#1a1a1a;font-weight:normal;font-style:normal;letter-spacing:0.25px">India</div>
<div class="t" style="right:1264px;top:391.86px;font-size:14.4px;line-height:14.4px;color:#252423;font-weight:normal;font-style:italic;">2</div>
<div class="t" style="left:353.5px;top:391.86px;font-size:14.4px;line-height:14.4px;color:#1a1a1a;font-weight:normal;font-style:normal;letter-spacing:0.25px">Abhilash</div>
<div class="t" style="right:1065px;top:391.86px;font-size:14.4px;line-height:14.4px;color:#252423;font-weight:normal;font-style:italic;">345</div>
<div class="t" style="right:948px;top:391.86px;font-size:14.4px;line-height:14.4px;color:#252423;font-weight:normal;font-style:italic;">345</div>
<div class="t" style="right:782px;top:391.86px;font-size:14.4px;line-height:14.4px;color:#252423;font-weight:normal;font-style:italic;">3456</div>
<div class="t" style="right:709px;top:391.86px;font-size:14.4px;line-height:14.4px;color:#252423;font-weight:normal;font-style:italic;">4146</div>
<div class="t" style="right:604px;top:391.86px;font-size:14.4px;line-height:14.4px;color:#252423;font-weight:normal;font-style:italic;">34702</div>
<div class="t" style="right:461px;top:391.86px;font-size:14.4px;line-height:14.4px;color:#252423;font-weight:normal;font-style:italic;">0.497685185185185</div>
<div class="t" style="right:335px;top:391.86px;font-size:14.4px;line-height:14.4px;color:#252423;font-weight:normal;font-style:italic;">04 March 1990</div>
<div class="t" style="right:197px;top:391.86px;font-size:14.4px;line-height:14.4px;color:#252423;font-weight:normal;font-style:italic;">200</div>
<div class="t" style="left:1420.5px;top:391.86px;font-size:14.4px;line-height:14.4px;color:#1a1a1a;font-weight:normal;font-style:normal;letter-spacing:0.25px">Australia &amp; India</div>
<div class="t" style="right:1416px;top:417.46px;font-size:14.4px;line-height:14.4px;color:#252423;font-weight:normal;font-style:italic;">2020</div>
<div class="t" style="left:201.5px;top:417.46px;font-size:14.4px;line-height:14.4px;color:#1a1a1a;font-weight:normal;font-style:normal;letter-spacing:0.25px">Australia</div>
<div class="t" style="right:1264px;top:417.46px;font-size:14.4px;line-height:14.4px;color:#252423;font-weight:normal;font-style:italic;">1</div>
<div class="t" style="left:353.5px;top:417.46px;font-size:14.4px;line-height:14.4px;color:#1a1a1a;font-weight:normal;font-style:normal;letter-spacing:0.25px">Akshay</div>
<div class="t" style="right:1065px;top:417.46px;font-size:14.4px;line-height:14.4px;color:#252423;font-weight:normal;font-style:italic;">452</div>
<div class="t" style="right:948px;top:417.46px;font-size:14.4px;line-height:14.4px;color:#252423;font-weight:normal;font-style:italic;">387</div>
<div class="t" style="right:782px;top:417.46px;font-size:14.4px;line-height:14.4px;color:#252423;font-weight:normal;font-style:italic;">4563</div>
<div class="t" style="right:709px;top:417.46px;font-size:14.4px;line-height:14.4px;color:#252423;font-weight:normal;font-style:italic;">5402</div>
<div class="t" style="right:604px;top:417.46px;font-size:14.4px;line-height:14.4px;color:#252423;font-weight:normal;font-style:italic;">37227</div>
<div class="t" style="right:461px;top:417.46px;font-size:14.4px;line-height:14.4px;color:#252423;font-weight:normal;font-style:italic;">0.205821759259259</div>
<div class="t" style="right:335px;top:417.46px;font-size:14.4px;line-height:14.4px;color:#252423;font-weight:normal;font-style:italic;">05 March 1990</div>
<div class="t" style="right:197px;top:417.46px;font-size:14.4px;line-height:14.4px;color:#252423;font-weight:normal;font-style:italic;">100</div>
<div class="t" style="left:1420.5px;top:417.46px;font-size:14.4px;line-height:14.4px;color:#1a1a1a;font-weight:normal;font-style:normal;letter-spacing:0.25px">Australia &amp; India</div>
<div class="t" style="right:1416px;top:445.16px;font-size:14.4px;line-height:14.4px;color:#252423;font-weight:normal;font-style:italic;">2015</div>
<div class="t" style="left:201.5px;top:445.16px;font-size:14.4px;line-height:14.4px;color:#1a1a1a;font-weight:normal;font-style:normal;letter-spacing:0.25px">India</div>
<div class="t" style="right:1264px;top:445.16px;font-size:14.4px;line-height:14.4px;color:#252423;font-weight:normal;font-style:italic;">3</div>
<div class="t" style="left:353.5px;top:445.16px;font-size:14.4px;line-height:14.4px;color:#1a1a1a;font-weight:normal;font-style:normal;letter-spacing:0.25px">Salman</div>
<div class="t" style="right:1065px;top:445.16px;font-size:14.4px;line-height:14.4px;color:#252423;font-weight:normal;font-style:italic;">345</div>
<div class="t" style="right:948px;top:445.16px;font-size:14.4px;line-height:14.4px;color:#252423;font-weight:normal;font-style:italic;">489</div>
<div class="t" style="right:782px;top:445.16px;font-size:14.4px;line-height:14.4px;color:#252423;font-weight:normal;font-style:italic;">5346</div>
<div class="t" style="right:709px;top:445.16px;font-size:14.4px;line-height:14.4px;color:#252423;font-weight:normal;font-style:italic;">6180</div>
<div class="t" style="right:604px;top:445.16px;font-size:14.4px;line-height:14.4px;color:#252423;font-weight:normal;font-style:italic;">34388</div>
<div class="t" style="right:461px;top:445.16px;font-size:14.4px;line-height:14.4px;color:#252423;font-weight:normal;font-style:italic;">0.205844907407407</div>
<div class="t" style="right:335px;top:445.16px;font-size:14.4px;line-height:14.4px;color:#252423;font-weight:normal;font-style:italic;">06 March 1990</div>
<div class="t" style="right:197px;top:445.16px;font-size:14.4px;line-height:14.4px;color:#252423;font-weight:normal;font-style:italic;">300</div>
<div class="t" style="left:1420.5px;top:445.16px;font-size:14.4px;line-height:14.4px;color:#1a1a1a;font-weight:normal;font-style:normal;letter-spacing:0.25px">Australia &amp; India</div>
<div class="t" style="right:1416px;top:470.96px;font-size:14.4px;line-height:14.4px;color:#252423;font-weight:normal;font-style:italic;">2019</div>
<div class="t" style="left:201.5px;top:470.96px;font-size:14.4px;line-height:14.4px;color:#1a1a1a;font-weight:normal;font-style:normal;letter-spacing:0.25px">America</div>
<div class="t" style="right:1264px;top:470.96px;font-size:14.4px;line-height:14.4px;color:#252423;font-weight:normal;font-style:italic;">4</div>
<div class="t" style="left:353.5px;top:470.96px;font-size:14.4px;line-height:14.4px;color:#1a1a1a;font-weight:normal;font-style:normal;letter-spacing:0.25px">Katrina</div>
<div class="t" style="right:1065px;top:470.96px;font-size:14.4px;line-height:14.4px;color:#252423;font-weight:normal;font-style:italic;">465</div>
<div class="t" style="right:948px;top:470.96px;font-size:14.4px;line-height:14.4px;color:#252423;font-weight:normal;font-style:italic;">398</div>
<div class="t" style="right:782px;top:470.96px;font-size:14.4px;line-height:14.4px;color:#252423;font-weight:normal;font-style:italic;">4567</div>
<div class="t" style="right:709px;top:470.96px;font-size:14.4px;line-height:14.4px;color:#252423;font-weight:normal;font-style:italic;">5430</div>
<div class="t" style="right:604px;top:470.96px;font-size:14.4px;line-height:14.4px;color:#252423;font-weight:normal;font-style:italic;">32472</div>
<div class="t" style="right:461px;top:470.96px;font-size:14.4px;line-height:14.4px;color:#252423;font-weight:normal;font-style:italic;">0.99787037037037</div>
<div class="t" style="right:335px;top:470.96px;font-size:14.4px;line-height:14.4px;color:#252423;font-weight:normal;font-style:italic;">07 March 1990</div>
<div class="t" style="right:197px;top:470.96px;font-size:14.4px;line-height:14.4px;color:#252423;font-weight:normal;font-style:italic;">400</div>
<div class="t" style="left:1420.5px;top:470.96px;font-size:14.4px;line-height:14.4px;color:#1a1a1a;font-weight:normal;font-style:normal;letter-spacing:0.25px">Other</div>
<div class="t" style="right:1416px;top:494.86px;font-size:14.4px;line-height:14.4px;color:#252423;font-weight:normal;font-style:italic;">2018</div>
<div class="t" style="left:201.5px;top:494.86px;font-size:14.4px;line-height:14.4px;color:#1a1a1a;font-weight:normal;font-style:normal;letter-spacing:0.25px">India</div>
<div class="t" style="right:1264px;top:494.86px;font-size:14.4px;line-height:14.4px;color:#252423;font-weight:normal;font-style:italic;">5</div>
<div class="t" style="left:353.5px;top:494.86px;font-size:14.4px;line-height:14.4px;color:#1a1a1a;font-weight:normal;font-style:normal;letter-spacing:0.25px">Kiara</div>
<div class="t" style="right:1065px;top:494.86px;font-size:14.4px;line-height:14.4px;color:#252423;font-weight:normal;font-style:italic;">387</div>
<div class="t" style="right:948px;top:494.86px;font-size:14.4px;line-height:14.4px;color:#252423;font-weight:normal;font-style:italic;">298</div>
<div class="t" style="right:782px;top:494.86px;font-size:14.4px;line-height:14.4px;color:#252423;font-weight:normal;font-style:italic;">4325</div>
<div class="t" style="right:709px;top:494.86px;font-size:14.4px;line-height:14.4px;color:#252423;font-weight:normal;font-style:italic;">5010</div>
<div class="t" style="right:604px;top:494.86px;font-size:14.4px;line-height:14.4px;color:#252423;font-weight:normal;font-style:italic;">31181</div>
<div class="t" style="right:461px;top:494.86px;font-size:14.4px;line-height:14.4px;color:#252423;font-weight:normal;font-style:italic;">0.581018518518518</div>
<div class="t" style="right:335px;top:494.86px;font-size:14.4px;line-height:14.4px;color:#252423;font-weight:normal;font-style:italic;">08 March 1990</div>
<div class="t" style="right:197px;top:494.86px;font-size:14.4px;line-height:14.4px;color:#252423;font-weight:normal;font-style:italic;">500</div>
<div class="t" style="left:1420.5px;top:494.86px;font-size:14.4px;line-height:14.4px;color:#1a1a1a;font-weight:normal;font-style:normal;letter-spacing:0.25px">Australia &amp; India</div>
<div class="t" style="right:1416px;top:520.66px;font-size:14.4px;line-height:14.4px;color:#252423;font-weight:normal;font-style:italic;">2018</div>
<div class="t" style="left:201.5px;top:520.66px;font-size:14.4px;line-height:14.4px;color:#1a1a1a;font-weight:normal;font-style:normal;letter-spacing:0.25px">India</div>
<div class="t" style="right:1264px;top:520.66px;font-size:14.4px;line-height:14.4px;color:#252423;font-weight:normal;font-style:italic;">6</div>
<div class="t" style="left:353.5px;top:520.66px;font-size:14.4px;line-height:14.4px;color:#1a1a1a;font-weight:normal;font-style:normal;letter-spacing:0.25px">Alia</div>
<div class="t" style="right:1065px;top:520.66px;font-size:14.4px;line-height:14.4px;color:#252423;font-weight:normal;font-style:italic;">297</div>
<div class="t" style="right:948px;top:520.66px;font-size:14.4px;line-height:14.4px;color:#252423;font-weight:normal;font-style:italic;">297</div>
<div class="t" style="right:782px;top:520.66px;font-size:14.4px;line-height:14.4px;color:#252423;font-weight:normal;font-style:italic;">4793</div>
<div class="t" style="right:709px;top:520.66px;font-size:14.4px;line-height:14.4px;color:#252423;font-weight:normal;font-style:italic;">5387</div>
<div class="t" style="right:604px;top:520.66px;font-size:14.4px;line-height:14.4px;color:#252423;font-weight:normal;font-style:italic;">33718</div>
<div class="t" style="right:461px;top:520.66px;font-size:14.4px;line-height:14.4px;color:#252423;font-weight:normal;font-style:italic;">0.206122685185185</div>
<div class="t" style="right:335px;top:520.66px;font-size:14.4px;line-height:14.4px;color:#252423;font-weight:normal;font-style:italic;">09 March 1990</div>
<div class="t" style="right:197px;top:520.66px;font-size:14.4px;line-height:14.4px;color:#252423;font-weight:normal;font-style:italic;">600</div>
<div class="t" style="left:1420.5px;top:520.66px;font-size:14.4px;line-height:14.4px;color:#1a1a1a;font-weight:normal;font-style:normal;letter-spacing:0.25px">Australia &amp; India</div>
<div class="t" style="right:1416px;top:546.96px;font-size:14.4px;line-height:14.4px;color:#252423;font-weight:normal;font-style:italic;">2020</div>
<div class="t" style="left:201.5px;top:546.96px;font-size:14.4px;line-height:14.4px;color:#1a1a1a;font-weight:normal;font-style:normal;letter-spacing:0.25px">Canada</div>
<div class="t" style="right:1264px;top:546.96px;font-size:14.4px;line-height:14.4px;color:#252423;font-weight:normal;font-style:italic;">3</div>
<div class="t" style="left:353.5px;top:546.96px;font-size:14.4px;line-height:14.4px;color:#1a1a1a;font-weight:normal;font-style:normal;letter-spacing:0.25px">Samantha</div>
<div class="t" style="right:1065px;top:546.96px;font-size:14.4px;line-height:14.4px;color:#252423;font-weight:normal;font-style:italic;">398</div>
<div class="t" style="right:948px;top:546.96px;font-size:14.4px;line-height:14.4px;color:#252423;font-weight:normal;font-style:italic;">428</div>
<div class="t" style="right:782px;top:546.96px;font-size:14.4px;line-height:14.4px;color:#252423;font-weight:normal;font-style:italic;">4592</div>
<div class="t" style="right:709px;top:546.96px;font-size:14.4px;line-height:14.4px;color:#252423;font-weight:normal;font-style:italic;">5418</div>
<div class="t" style="right:604px;top:546.96px;font-size:14.4px;line-height:14.4px;color:#252423;font-weight:normal;font-style:italic;">33630</div>
<div class="t" style="right:461px;top:546.96px;font-size:14.4px;line-height:14.4px;color:#252423;font-weight:normal;font-style:italic;">0.581030092592593</div>
<div class="t" style="right:335px;top:546.96px;font-size:14.4px;line-height:14.4px;color:#252423;font-weight:normal;font-style:italic;">10 March 1990</div>
<div class="t" style="right:197px;top:546.96px;font-size:14.4px;line-height:14.4px;color:#252423;font-weight:normal;font-style:italic;">300</div>
<div class="t" style="left:1420.5px;top:546.96px;font-size:14.4px;line-height:14.4px;color:#1a1a1a;font-weight:normal;font-style:normal;letter-spacing:0.25px">Other</div>
<div class="t" style="right:1416px;top:572.76px;font-size:14.4px;line-height:14.4px;color:#252423;font-weight:normal;font-style:italic;">2021</div>
<div class="t" style="left:201.5px;top:572.76px;font-size:14.4px;line-height:14.4px;color:#1a1a1a;font-weight:normal;font-style:normal;letter-spacing:0.25px">India</div>
<div class="t" style="right:1264px;top:572.76px;font-size:14.4px;line-height:14.4px;color:#252423;font-weight:normal;font-style:italic;">4</div>
<div class="t" style="left:353.5px;top:572.76px;font-size:14.4px;line-height:14.4px;color:#1a1a1a;font-weight:normal;font-style:normal;letter-spacing:0.25px">Harsha</div>
<div class="t" style="right:1065px;top:572.76px;font-size:14.4px;line-height:14.4px;color:#252423;font-weight:normal;font-style:italic;">398</div>
<div class="t" style="right:948px;top:572.76px;font-size:14.4px;line-height:14.4px;color:#252423;font-weight:normal;font-style:italic;">428</div>
<div class="t" style="right:782px;top:572.76px;font-size:14.4px;line-height:14.4px;color:#252423;font-weight:normal;font-style:italic;">4592</div>
<div class="t" style="right:709px;top:572.76px;font-size:14.4px;line-height:14.4px;color:#252423;font-weight:normal;font-style:italic;">5418</div>
<div class="t" style="right:604px;top:572.76px;font-size:14.4px;line-height:14.4px;color:#252423;font-weight:normal;font-style:italic;">33631</div>
<div class="t" style="right:461px;top:572.76px;font-size:14.4px;line-height:14.4px;color:#252423;font-weight:normal;font-style:italic;">0.622696759259259</div>
<div class="t" style="right:335px;top:572.76px;font-size:14.4px;line-height:14.4px;color:#252423;font-weight:normal;font-style:italic;">20 January 1991</div>
<div class="t" style="right:197px;top:572.76px;font-size:14.4px;line-height:14.4px;color:#252423;font-weight:normal;font-style:italic;">400</div>
<div class="t" style="left:1420.5px;top:572.76px;font-size:14.4px;line-height:14.4px;color:#1a1a1a;font-weight:normal;font-style:normal;letter-spacing:0.25px">Australia &amp; India</div>
<div class="t" style="right:1416px;top:599.86px;font-size:14.4px;line-height:14.4px;color:#252423;font-weight:normal;font-style:italic;">2020</div>
<div class="t" style="left:201.5px;top:599.86px;font-size:14.4px;line-height:14.4px;color:#1a1a1a;font-weight:normal;font-style:normal;letter-spacing:0.25px">India</div>
<div class="t" style="right:1264px;top:599.86px;font-size:14.4px;line-height:14.4px;color:#252423;font-weight:normal;font-style:italic;">3</div>
<div class="t" style="left:353.5px;top:599.86px;font-size:14.4px;line-height:14.4px;color:#1a1a1a;font-weight:normal;font-style:normal;letter-spacing:0.25px">Kareena</div>
<div class="t" style="right:1065px;top:599.86px;font-size:14.4px;line-height:14.4px;color:#252423;font-weight:normal;font-style:italic;">398</div>
<div class="t" style="right:948px;top:599.86px;font-size:14.4px;line-height:14.4px;color:#252423;font-weight:normal;font-style:italic;">428</div>
<div class="t" style="right:782px;top:599.86px;font-size:14.4px;line-height:14.4px;color:#252423;font-weight:normal;font-style:italic;">4592</div>
<div class="t" style="right:709px;top:599.86px;font-size:14.4px;line-height:14.4px;color:#252423;font-weight:normal;font-style:italic;">5418</div>
<div class="t" style="right:604px;top:599.86px;font-size:14.4px;line-height:14.4px;color:#252423;font-weight:normal;font-style:italic;">33630</div>
<div class="t" style="right:461px;top:599.86px;font-size:14.4px;line-height:14.4px;color:#252423;font-weight:normal;font-style:italic;">0.581030092592593</div>
<div class="t" style="right:335px;top:599.86px;font-size:14.4px;line-height:14.4px;color:#252423;font-weight:normal;font-style:italic;">14 March 1991</div>
<div class="t" style="right:197px;top:599.86px;font-size:14.4px;line-height:14.4px;color:#252423;font-weight:normal;font-style:italic;">300</div>
<div class="t" style="left:1420.5px;top:599.86px;font-size:14.4px;line-height:14.4px;color:#1a1a1a;font-weight:normal;font-style:normal;letter-spacing:0.25px">Australia &amp; India</div>
<div class="t" style="right:1416px;top:625.46px;font-size:14.4px;line-height:14.4px;color:#252423;font-weight:normal;font-style:italic;">2021</div>
<div class="t" style="left:201.5px;top:625.46px;font-size:14.4px;line-height:14.4px;color:#1a1a1a;font-weight:normal;font-style:normal;letter-spacing:0.25px">New Zealand</div>
<div class="t" style="right:1264px;top:625.46px;font-size:14.4px;line-height:14.4px;color:#252423;font-weight:normal;font-style:italic;">4</div>
<div class="t" style="left:353.5px;top:625.46px;font-size:14.4px;line-height:14.4px;color:#1a1a1a;font-weight:normal;font-style:normal;letter-spacing:0.25px">Soniya</div>
<div class="t" style="right:1065px;top:625.46px;font-size:14.4px;line-height:14.4px;color:#252423;font-weight:normal;font-style:italic;">398</div>
<div class="t" style="right:948px;top:625.46px;font-size:14.4px;line-height:14.4px;color:#252423;font-weight:normal;font-style:italic;">428</div>
<div class="t" style="right:782px;top:625.46px;font-size:14.4px;line-height:14.4px;color:#252423;font-weight:normal;font-style:italic;">4592</div>
<div class="t" style="right:709px;top:625.46px;font-size:14.4px;line-height:14.4px;color:#252423;font-weight:normal;font-style:italic;">5418</div>
<div class="t" style="right:604px;top:625.46px;font-size:14.4px;line-height:14.4px;color:#252423;font-weight:normal;font-style:italic;">33631</div>
<div class="t" style="right:461px;top:625.46px;font-size:14.4px;line-height:14.4px;color:#252423;font-weight:normal;font-style:italic;">0.622696759259259</div>
<div class="t" style="right:335px;top:625.46px;font-size:14.4px;line-height:14.4px;color:#252423;font-weight:normal;font-style:italic;">10 July 1991</div>
<div class="t" style="right:197px;top:625.46px;font-size:14.4px;line-height:14.4px;color:#252423;font-weight:normal;font-style:italic;">400</div>
<div class="t" style="left:1420.5px;top:625.46px;font-size:14.4px;line-height:14.4px;color:#1a1a1a;font-weight:normal;font-style:normal;letter-spacing:0.25px">Other</div>
<div class="t" style="right:1416px;top:651.46px;font-size:14.4px;line-height:14.4px;color:#252423;font-weight:normal;font-style:italic;">2017</div>
<div class="t" style="left:201.5px;top:651.46px;font-size:14.4px;line-height:14.4px;color:#1a1a1a;font-weight:normal;font-style:normal;letter-spacing:0.25px">India</div>
<div class="t" style="right:1264px;top:651.46px;font-size:14.4px;line-height:14.4px;color:#252423;font-weight:normal;font-style:italic;">7</div>
<div class="t" style="left:353.5px;top:651.46px;font-size:14.4px;line-height:14.4px;color:#1a1a1a;font-weight:normal;font-style:normal;letter-spacing:0.25px">Jenelia</div>
<div class="t" style="right:1065px;top:651.46px;font-size:14.4px;line-height:14.4px;color:#252423;font-weight:normal;font-style:italic;">398</div>
<div class="t" style="right:948px;top:651.46px;font-size:14.4px;line-height:14.4px;color:#252423;font-weight:normal;font-style:italic;">398</div>
<div class="t" style="right:782px;top:651.46px;font-size:14.4px;line-height:14.4px;color:#252423;font-weight:normal;font-style:italic;">2998</div>
<div class="t" style="right:709px;top:651.46px;font-size:14.4px;line-height:14.4px;color:#252423;font-weight:normal;font-style:italic;">3794</div>
<div class="t" style="right:604px;top:651.46px;font-size:14.4px;line-height:14.4px;color:#252423;font-weight:normal;font-style:italic;">35653</div>
<div class="t" style="right:461px;top:651.46px;font-size:14.4px;line-height:14.4px;color:#252423;font-weight:normal;font-style:italic;">22.3310416666667</div>
<div class="t" style="right:335px;top:651.46px;font-size:14.4px;line-height:14.4px;color:#252423;font-weight:normal;font-style:italic;">08 August 1991</div>
<div class="t" style="right:197px;top:651.46px;font-size:14.4px;line-height:14.4px;color:#252423;font-weight:normal;font-style:italic;">700</div>
<div class="t" style="left:1420.5px;top:651.46px;font-size:14.4px;line-height:14.4px;color:#1a1a1a;font-weight:normal;font-style:normal;letter-spacing:0.25px">Australia &amp; India</div>
<div class="t" style="right:1416px;top:677.66px;font-size:14.4px;line-height:14.4px;color:#252423;font-weight:normal;font-style:italic;">2015</div>
<div class="t" style="left:201.5px;top:677.66px;font-size:14.4px;line-height:14.4px;color:#1a1a1a;font-weight:normal;font-style:normal;letter-spacing:0.25px">Australia</div>
<div class="t" style="right:1264px;top:677.66px;font-size:14.4px;line-height:14.4px;color:#252423;font-weight:normal;font-style:italic;">8</div>
<div class="t" style="left:353.5px;top:677.66px;font-size:14.4px;line-height:14.4px;color:#1a1a1a;font-weight:normal;font-style:normal;letter-spacing:0.25px">Abhishhek</div>
<div class="t" style="right:1065px;top:677.66px;font-size:14.4px;line-height:14.4px;color:#252423;font-weight:normal;font-style:italic;">398</div>
<div class="t" style="right:948px;top:677.66px;font-size:14.4px;line-height:14.4px;color:#252423;font-weight:normal;font-style:italic;">420</div>
<div class="t" style="right:782px;top:677.66px;font-size:14.4px;line-height:14.4px;color:#252423;font-weight:normal;font-style:italic;">2998</div>
<div class="t" style="right:709px;top:677.66px;font-size:14.4px;line-height:14.4px;color:#252423;font-weight:normal;font-style:italic;">3816</div>
<div class="t" style="right:604px;top:677.66px;font-size:14.4px;line-height:14.4px;color:#252423;font-weight:normal;font-style:italic;">35654</div>
<div class="t" style="right:461px;top:677.66px;font-size:14.4px;line-height:14.4px;color:#252423;font-weight:normal;font-style:italic;">22.3727083333333</div>
<div class="t" style="right:335px;top:677.66px;font-size:14.4px;line-height:14.4px;color:#252423;font-weight:normal;font-style:italic;">09 August 1991</div>
<div class="t" style="right:197px;top:677.66px;font-size:14.4px;line-height:14.4px;color:#252423;font-weight:normal;font-style:italic;">800</div>
<div class="t" style="left:1420.5px;top:677.66px;font-size:14.4px;line-height:14.4px;color:#1a1a1a;font-weight:normal;font-style:normal;letter-spacing:0.25px">Australia &amp; India</div>
<div class="t" style="right:1416px;top:704.56px;font-size:14.4px;line-height:14.4px;color:#252423;font-weight:normal;font-style:italic;">2022</div>
<div class="t" style="left:201.5px;top:704.56px;font-size:14.4px;line-height:14.4px;color:#1a1a1a;font-weight:normal;font-style:normal;letter-spacing:0.25px">New Zealand</div>
<div class="t" style="right:1264px;top:704.56px;font-size:14.4px;line-height:14.4px;color:#252423;font-weight:normal;font-style:italic;">10</div>
<div class="t" style="left:353.5px;top:704.56px;font-size:14.4px;line-height:14.4px;color:#1a1a1a;font-weight:normal;font-style:normal;letter-spacing:0.25px">Jacqueline</div>
<div class="t" style="right:1065px;top:704.56px;font-size:14.4px;line-height:14.4px;color:#252423;font-weight:normal;font-style:italic;">398</div>
<div class="t" style="right:948px;top:704.56px;font-size:14.4px;line-height:14.4px;color:#252423;font-weight:normal;font-style:italic;">420</div>
<div class="t" style="right:782px;top:704.56px;font-size:14.4px;line-height:14.4px;color:#252423;font-weight:normal;font-style:italic;">2998</div>
<div class="t" style="right:709px;top:704.56px;font-size:14.4px;line-height:14.4px;color:#252423;font-weight:normal;font-style:italic;">3816</div>
<div class="t" style="right:604px;top:704.56px;font-size:14.4px;line-height:14.4px;color:#252423;font-weight:normal;font-style:italic;">35656</div>
<div class="t" style="right:461px;top:704.56px;font-size:14.4px;line-height:14.4px;color:#252423;font-weight:normal;font-style:italic;">22.4560416666667</div>
<div class="t" style="right:335px;top:704.56px;font-size:14.4px;line-height:14.4px;color:#252423;font-weight:normal;font-style:italic;">11 August 1991</div>
<div class="t" style="right:197px;top:704.56px;font-size:14.4px;line-height:14.4px;color:#252423;font-weight:normal;font-style:italic;">1000</div>
<div class="t" style="left:1420.5px;top:704.56px;font-size:14.4px;line-height:14.4px;color:#1a1a1a;font-weight:normal;font-style:normal;letter-spacing:0.25px">Other</div>
<div class="t" style="right:1416px;top:730.76px;font-size:14.4px;line-height:14.4px;color:#252423;font-weight:normal;font-style:italic;">2018</div>
<div class="t" style="left:201.5px;top:730.76px;font-size:14.4px;line-height:14.4px;color:#1a1a1a;font-weight:normal;font-style:normal;letter-spacing:0.25px">America</div>
<div class="t" style="right:1264px;top:730.76px;font-size:14.4px;line-height:14.4px;color:#252423;font-weight:normal;font-style:italic;">11</div>
<div class="t" style="left:353.5px;top:730.76px;font-size:14.4px;line-height:14.4px;color:#1a1a1a;font-weight:normal;font-style:normal;letter-spacing:0.25px">Shreya</div>
<div class="t" style="right:1065px;top:730.76px;font-size:14.4px;line-height:14.4px;color:#252423;font-weight:normal;font-style:italic;">398</div>
<div class="t" style="right:948px;top:730.76px;font-size:14.4px;line-height:14.4px;color:#252423;font-weight:normal;font-style:italic;">420</div>
<div class="t" style="right:782px;top:730.76px;font-size:14.4px;line-height:14.4px;color:#252423;font-weight:normal;font-style:italic;">2998</div>
<div class="t" style="right:709px;top:730.76px;font-size:14.4px;line-height:14.4px;color:#252423;font-weight:normal;font-style:italic;">3816</div>
<div class="t" style="right:604px;top:730.76px;font-size:14.4px;line-height:14.4px;color:#252423;font-weight:normal;font-style:italic;">35657</div>
<div class="t" style="right:461px;top:730.76px;font-size:14.4px;line-height:14.4px;color:#252423;font-weight:normal;font-style:italic;">22.4977083333333</div>
<div class="t" style="right:335px;top:730.76px;font-size:14.4px;line-height:14.4px;color:#252423;font-weight:normal;font-style:italic;">12 August 1991</div>
<div class="t" style="right:197px;top:730.76px;font-size:14.4px;line-height:14.4px;color:#252423;font-weight:normal;font-style:italic;">1100</div>
<div class="t" style="left:1420.5px;top:730.76px;font-size:14.4px;line-height:14.4px;color:#1a1a1a;font-weight:normal;font-style:normal;letter-spacing:0.25px">Other</div>
<div class="t" style="right:1416px;top:754.76px;font-size:14.4px;line-height:14.4px;color:#252423;font-weight:normal;font-style:italic;">2019</div>
<div class="t" style="left:201.5px;top:754.76px;font-size:14.4px;line-height:14.4px;color:#1a1a1a;font-weight:normal;font-style:normal;letter-spacing:0.25px">Switzerland</div>
<div class="t" style="right:1264px;top:754.76px;font-size:14.4px;line-height:14.4px;color:#252423;font-weight:normal;font-style:italic;">12</div>
<div class="t" style="left:353.5px;top:754.76px;font-size:14.4px;line-height:14.4px;color:#1a1a1a;font-weight:normal;font-style:normal;letter-spacing:0.25px">Anjali</div>
<div class="t" style="right:1065px;top:754.76px;font-size:14.4px;line-height:14.4px;color:#252423;font-weight:normal;font-style:italic;">398</div>
<div class="t" style="right:948px;top:754.76px;font-size:14.4px;line-height:14.4px;color:#252423;font-weight:normal;font-style:italic;">420</div>
<div class="t" style="right:782px;top:754.76px;font-size:14.4px;line-height:14.4px;color:#252423;font-weight:normal;font-style:italic;">2998</div>
<div class="t" style="right:709px;top:754.76px;font-size:14.4px;line-height:14.4px;color:#252423;font-weight:normal;font-style:italic;">3816</div>
<div class="t" style="right:604px;top:754.76px;font-size:14.4px;line-height:14.4px;color:#252423;font-weight:normal;font-style:italic;">35658</div>
<div class="t" style="right:461px;top:754.76px;font-size:14.4px;line-height:14.4px;color:#252423;font-weight:normal;font-style:italic;">22.539375</div>
<div class="t" style="right:335px;top:754.76px;font-size:14.4px;line-height:14.4px;color:#252423;font-weight:normal;font-style:italic;">13 August 1991</div>
<div class="t" style="right:197px;top:754.76px;font-size:14.4px;line-height:14.4px;color:#252423;font-weight:normal;font-style:italic;">1200</div>
<div class="t" style="left:1420.5px;top:754.76px;font-size:14.4px;line-height:14.4px;color:#1a1a1a;font-weight:normal;font-style:normal;letter-spacing:0.25px">Other</div>
<div class="t" style="right:1416px;top:780.56px;font-size:14.4px;line-height:14.4px;color:#252423;font-weight:normal;font-style:italic;">2021</div>
<div class="t" style="left:201.5px;top:780.56px;font-size:14.4px;line-height:14.4px;color:#1a1a1a;font-weight:normal;font-style:normal;letter-spacing:0.25px">Brazil</div>
<div class="t" style="right:1264px;top:780.56px;font-size:14.4px;line-height:14.4px;color:#252423;font-weight:normal;font-style:italic;">13</div>
<div class="t" style="left:353.5px;top:780.56px;font-size:14.4px;line-height:14.4px;color:#1a1a1a;font-weight:normal;font-style:normal;letter-spacing:0.25px">Nayantara</div>
<div class="t" style="right:1065px;top:780.56px;font-size:14.4px;line-height:14.4px;color:#252423;font-weight:normal;font-style:italic;">398</div>
<div class="t" style="right:948px;top:780.56px;font-size:14.4px;line-height:14.4px;color:#252423;font-weight:normal;font-style:italic;">420</div>
<div class="t" style="right:782px;top:780.56px;font-size:14.4px;line-height:14.4px;color:#252423;font-weight:normal;font-style:italic;">2998</div>
<div class="t" style="right:709px;top:780.56px;font-size:14.4px;line-height:14.4px;color:#252423;font-weight:normal;font-style:italic;">3816</div>
<div class="t" style="right:604px;top:780.56px;font-size:14.4px;line-height:14.4px;color:#252423;font-weight:normal;font-style:italic;">35659</div>
<div class="t" style="right:461px;top:780.56px;font-size:14.4px;line-height:14.4px;color:#252423;font-weight:normal;font-style:italic;">22.5810416666667</div>
<div class="t" style="right:335px;top:780.56px;font-size:14.4px;line-height:14.4px;color:#252423;font-weight:normal;font-style:italic;">14 August 1991</div>
<div class="t" style="right:197px;top:780.56px;font-size:14.4px;line-height:14.4px;color:#252423;font-weight:normal;font-style:italic;">1300</div>
<div class="t" style="left:1420.5px;top:780.56px;font-size:14.4px;line-height:14.4px;color:#1a1a1a;font-weight:normal;font-style:normal;letter-spacing:0.25px">Other</div>
</body></html>
